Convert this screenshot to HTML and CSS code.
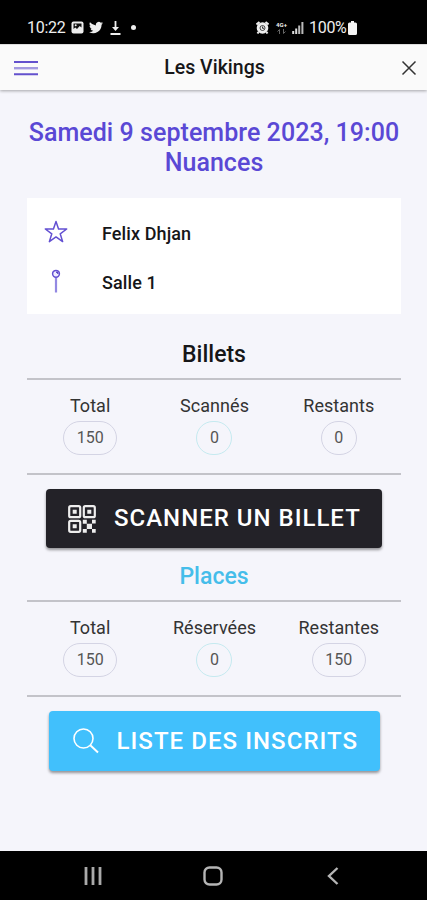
FILE: index.html
```html
<!DOCTYPE html>
<html lang="fr">
<head>
<meta charset="utf-8">
<title>Les Vikings</title>
<link rel="stylesheet" href="styles.css">
</head>
<body>
<div class="status">
  <span class="clock">10:22</span>
  <svg class="s-pic" width="13" height="13" viewBox="0 0 13 13"><rect x=".5" y=".5" width="12" height="12" rx="2" fill="#eee"/><path d="M2.5 2.5h8v4L8.7 5 6 8 4.300 6.500 2.500 8z" fill="#111"/><circle cx="4.700" cy="4.300" r="1" fill="#eee"/></svg>
  <svg class="s-bird" width="14" height="13" viewBox="0 2 24 20"><path fill="#eee" d="M24 4.600c-.9.400-1.800.7-2.800.8 1-.6 1.800-1.600 2.200-2.700-1 .6-2 1-3.100 1.200A4.900 4.900 0 0 0 11.900 8.400 14 14 0 0 1 1.700 3.200 4.900 4.900 0 0 0 3.200 9.700c-.8 0-1.600-.2-2.200-.6 0 2.300 1.600 4.400 3.900 4.900-.7.200-1.500.2-2.200.1.600 2 2.400 3.400 4.600 3.400A9.900 9.900 0 0 1 0 19.500 14 14 0 0 0 21.500 7.100c1-.7 1.800-1.600 2.500-2.500z"/></svg>
  <svg class="s-down" width="11" height="14" viewBox="0 0 11 14"><path d="M5.500 0v8M.5 13h10" stroke="#eee" stroke-width="1.800"/><path d="M2 6h7L5.500 10z" fill="#eee"/></svg>
  <i class="dot"></i>
  <svg class="s-alarm" width="13" height="13" viewBox="0 0 13 13"><circle cx="6.500" cy="7" r="5.800" fill="#eee"/><path d="M.5 3.500 3.500 1M12.500 3.500 9.500 1M2.500 11l-1 1.500M10.500 11l1 1.500" stroke="#eee" stroke-width="2"/><circle cx="6.500" cy="7" r="2.500" fill="none" stroke="#333" stroke-width=".9"/><path d="M6.500 5.500v1.800H8" fill="none" stroke="#333"/></svg>
  <span class="net"><b>4G+</b><svg width="9" height="5" viewBox="0 0 9 5"><path d="M2.500 5V.5L.5 2.500M6.500 0v4.500l2-2" fill="none" stroke="#666"/></svg></span>
  <svg class="s-signal" width="12" height="13" viewBox="0 0 12 13"><path d="M1.200 13v-3M4.200 13V7.500" stroke="#ddd" stroke-width="2"/><path d="M7.200 13V4.500M10.400 13V1" stroke="#bbb" stroke-width="2"/></svg>
  <span class="percent">100%</span>
  <svg class="s-bat" width="9" height="14" viewBox="0 0 9 14"><path d="M3 0h3v1.500h1.500Q9 1.500 9 3v9.500Q9 14 7.500 14h-6Q0 14 0 12.500V3q0-1.500 1.500-1.500H3z" fill="#f4f4f4"/></svg>
</div>
<header class="bar">
  <svg class="menu" width="24" height="16" viewBox="0 0 24 16"><path d="M0 2h24M0 14.200h24" stroke="#6351cd" stroke-width="2"/><path d="M0 8.200h24" stroke="#a39ae0" stroke-width="2.400"/></svg>
  <h1>Les Vikings</h1>
  <svg class="close" width="16" height="16" viewBox="0 0 16 16"><path d="M1.500 1.500l13 13M14.500 1.500l-13 13" stroke="#333" stroke-width="1.500"/></svg>
</header>
<main>
  <h2 class="event">Samedi 9 septembre 2023, 19:00<br>Nuances</h2>
  <section class="card">
    <div class="row"><svg width="24" height="24" viewBox="0 0 24 24"><path d="M12 1.500l2.550 7.500h8.150l-6.500 4.800 2.450 7.800L12 16.900l-6.650 4.700 2.450-7.800L1.300 9h8.150z" fill="none" stroke="#6350d2" stroke-width="1.500" stroke-linejoin="round"/></svg><span>Felix Dhjan</span></div>
    <div class="row"><svg width="24" height="24" viewBox="0 0 24 24"><path d="M12 8.500V23.500" stroke="#9389e2" stroke-width="2.200"/><circle cx="12" cy="4.800" r="3.400" fill="#eeecff" stroke="#6350d2" stroke-width="1.500"/><path d="M12 3.200a2 2 0 0 1 2 1.800" stroke="#5340bd" stroke-width="1.200" fill="none"/></svg><span>Salle 1</span></div>
  </section>
  <h3>Billets</h3>
  <section class="stats">
    <div><span>Total</span><b>150</b></div>
    <div><span>Scannés</span><b class="cyan">0</b></div>
    <div><span>Restants</span><b>0</b></div>
  </section>
  <button class="scan"><svg width="28" height="28" viewBox="0 0 28 28"><g fill="none" stroke="#eee" stroke-width="2.200"><rect x="1.200" y="1.200" width="11" height="11" rx="1.500"/><rect x="15.800" y="1.200" width="11" height="11" rx="1.500"/><rect x="1.200" y="15.800" width="11" height="11" rx="1.500"/></g><path fill="#eee" d="M4.700 4.700h4v4h-4zM19.300 4.700h4v4h-4zM4.700 19.300h4v4h-4zM14.800 14.800h4v4h-4zM24 14.800h3.700v3.700H24zM18.800 18.800h5.200v5.200h-5.200zM14.800 24h4v3.700h-4zM24 24h3.700v3.700H24z"/></svg><span>SCANNER UN BILLET</span></button>
  <h3 class="places">Places</h3>
  <section class="stats">
    <div><span>Total</span><b>150</b></div>
    <div><span>Réservées</span><b class="cyan">0</b></div>
    <div><span>Restantes</span><b>150</b></div>
  </section>
  <button class="list"><svg width="26" height="26" viewBox="0 0 26 26"><circle cx="10.500" cy="10.500" r="9.500" fill="none" stroke="#fff" stroke-width="1.600"/><path d="M17.300 17.300l7.700 7.200" stroke="#fff" stroke-width="2"/></svg><span>LISTE DES INSCRITS</span></button>
</main>
<nav>
  <svg width="18" height="18" viewBox="0 0 18 18"><path d="M2 0v18M9 0v18M16 0v18" stroke="#aaa" stroke-width="2.800"/></svg>
  <svg width="20" height="20" viewBox="0 0 20 20"><rect x="1.500" y="1.500" width="17" height="17" rx="5" fill="none" stroke="#b5b5b5" stroke-width="2.400"/></svg>
  <svg width="12" height="18" viewBox="0 0 12 18"><path d="M10.500 1 2 9l8.500 8" fill="none" stroke="#b5b5b5" stroke-width="2.400"/></svg>
</nav>
</body>
</html>
```

FILE: styles.css
```css
* { box-sizing: border-box; }
body { margin: 0; width: 427px; height: 900px; display: flex; flex-direction: column; overflow: hidden; background: #f5f5fb; color: #161618; font-family: Roboto, sans-serif; }
svg { display: block; flex: none; }
h1, h2, h3 { margin: 0; font-weight: 500; }

.status { height: 44px; flex: none; background: #000; color: #eee; display: flex; align-items: center; padding: 11px 0 0 27px; font-size: 16px; line-height: 18px; }
.clock { width: 38px; letter-spacing: -.3px; }
.s-pic { margin-left: 6px; }
.s-bird { margin-left: 5px; }
.s-down { margin-left: 7px; }
.dot { width: 5px; height: 5px; border-radius: 50%; background: #eee; margin-left: 10px; }
.s-alarm { margin-left: 120px; }
.net { width: 13px; margin-left: 6px; display: flex; flex-direction: column; align-items: center; gap: 1px; }
.net b { font-size: 6px; line-height: 6px; }
.s-signal { margin-left: 4px; }
.percent { margin-left: 5px; width: 38px; white-space: nowrap; letter-spacing: -.3px; }
.s-bat { margin-left: 1px; }

.bar { height: 46px; flex: none; display: grid; grid-template-columns: 24px 1fr 16px; align-items: center; padding: 0 10px 0 14px; background: #fafafa; border-top: 1px solid #ddd; box-shadow: 0 1px 3px #0005; }
.bar h1 { font-size: 19.5px; line-height: 24px; text-align: center; padding: 1px 10px 0 0; }

main { flex: 1; display: flex; flex-direction: column; align-items: center; padding: 28px 26px 0 27px; }
.event { color: #5a48d5; font-size: 25px; line-height: 30px; letter-spacing: .05px; text-align: center; white-space: nowrap; }
.card { width: 100%; height: 116px; margin-top: 20px; padding: 9px 17px 0; background: #fff; display: flex; flex-direction: column; }
.row { height: 49px; flex: none; display: flex; align-items: center; gap: 34px; font-size: 18px; font-weight: 500; }
.row + .row { height: 50px; }
.row span { padding-top: 3px; letter-spacing: .1px; }
h3 { font-size: 23px; line-height: 28px; margin-top: 27px; }
.stats { width: 100%; height: 97px; margin-top: 9px; border-top: 2px solid #c3c3c9; border-bottom: 2px solid #c3c3c9; display: grid; grid-template-columns: repeat(3, 1fr); padding: 15px 0 0 1px; }
.stats div { display: flex; flex-direction: column; align-items: center; }
.stats span { font-size: 18px; line-height: 22px; letter-spacing: .05px; color: #333; }
.stats b { margin-top: 4px; height: 34px; min-width: 36px; padding: 0 12.500px; border: 1px solid #d4d4e4; border-radius: 17px; font-weight: 400; font-size: 16px; line-height: 32px; text-align: center; color: #555; }
.stats .cyan { border-color: #c5eaf0; }
button { border: 0; padding: 0; display: flex; align-items: center; color: #fff; font: 500 24px/30px Roboto, sans-serif; border-radius: 4px; box-shadow: 0 2px 3px #0006; white-space: nowrap; }
.scan { width: 336px; height: 59px; margin-top: 14px; padding-left: 22px; gap: 18px; background: #232228; letter-spacing: 1px; }
.places { margin-top: 15px; color: #45bdea; }
.list { width: 331px; height: 60px; margin-top: 14px; padding-left: 24px; gap: 18px; background: #41c0fc; letter-spacing: 1.050px; }
button span { padding-bottom: 1px; }

nav { height: 49px; flex: none; background: #000; display: flex; align-items: center; padding-left: 84px; }
nav svg:nth-child(2) { margin-left: 101px; }
nav svg:nth-child(3) { margin-left: 104px; }
```
